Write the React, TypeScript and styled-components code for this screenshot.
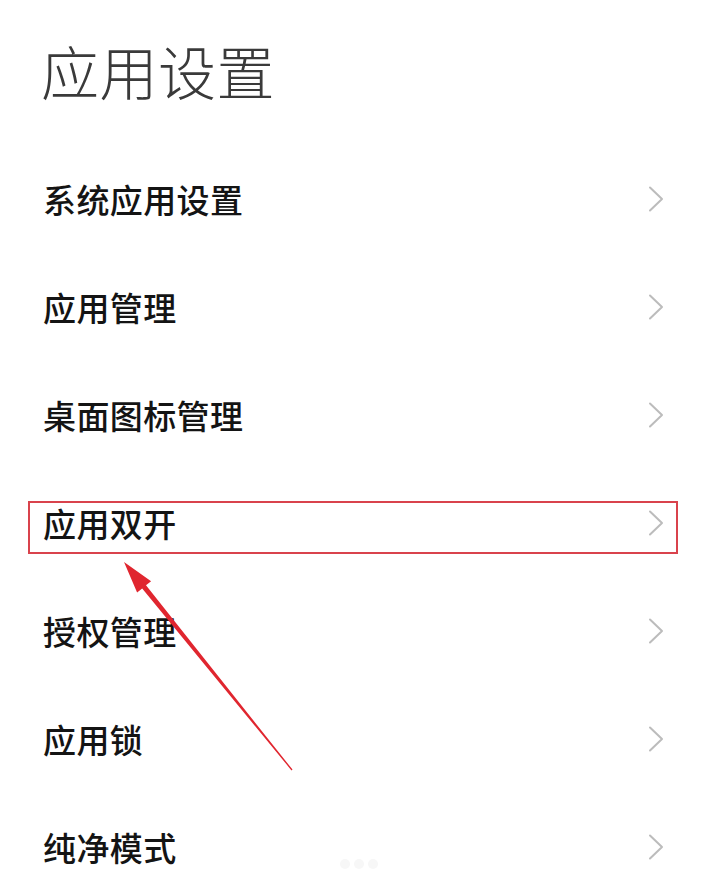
import React from "react"
import styled, { createGlobalStyle } from "styled-components"

const GlobalStyle = createGlobalStyle`
  html, body {
    margin: 0;
    padding: 0;
    background: #ffffff;
  }
  body {
    font-family: "Noto Sans CJK SC", "Noto Sans", sans-serif;
  }
`

const Page = styled.div`
  position: relative;
  width: 707px;
  height: 885px;
  overflow: hidden;
  background: #ffffff;
`

const Title = styled.h1`
  margin: 0;
  padding: 23px 0 28px 41px;
  font-size: 58px;
  line-height: 94px;
  font-weight: 300;
  color: #3a3a3a;
  letter-spacing: 0.5px;
`

const List = styled.ul`
  list-style: none;
  margin: 0;
  padding: 0;
`

const Row = styled.li`
  position: relative;
  display: flex;
  align-items: center;
  justify-content: space-between;
  height: 108px;
  padding: 0 43px 0 43px;
`

const Label = styled.span`
  font-size: 33px;
  font-weight: 500;
  color: #141414;
  letter-spacing: 0.4px;
`

const Highlight = styled.div`
  position: absolute;
  left: 28px;
  right: 29px;
  top: 32px;
  height: 53px;
  box-sizing: border-box;
  border: 2px solid #d9434c;
`

const Chevron = () => (
  <svg width="16" height="26" viewBox="0 0 16 26">
    <path d="M2 1.5 L14 13 L2 24.5" fill="none" stroke="#bcbcbc" strokeWidth="2" strokeLinecap="round" strokeLinejoin="round" />
  </svg>
)

const Overlay = styled.svg`
  position: absolute;
  left: 0;
  top: 0;
  pointer-events: none;
`

const Dots = styled.div`
  position: absolute;
  left: 340px;
  top: 859px;
  display: flex;
  gap: 4px;
`

const Dot = styled.span`
  width: 10px;
  height: 10px;
  border-radius: 50%;
  background: #f7f7f7;
`

const items = ["系统应用设置", "应用管理", "桌面图标管理", "应用双开", "授权管理", "应用锁", "纯净模式"]

const App: React.FC = () => {
  return (
    <Page>
      <GlobalStyle />
      <Title>应用设置</Title>
      <List>
        {items.map((text) => (
          <Row key={text}>
            <Label>{text}</Label>
            <Chevron />
            {text === "应用双开" && <Highlight />}
          </Row>
        ))}
      </List>
      <Dots>
        <Dot />
        <Dot />
        <Dot />
      </Dots>
      <Overlay width="707" height="885" viewBox="0 0 707 885">
        <polygon
          points="124,562 151.1,581.2 146,585.3 292.5,769.6 291.5,770.4 142.2,588.5 137.1,592.6"
          fill="#e0262f"
        />
      </Overlay>
    </Page>
  )
}

export default App
